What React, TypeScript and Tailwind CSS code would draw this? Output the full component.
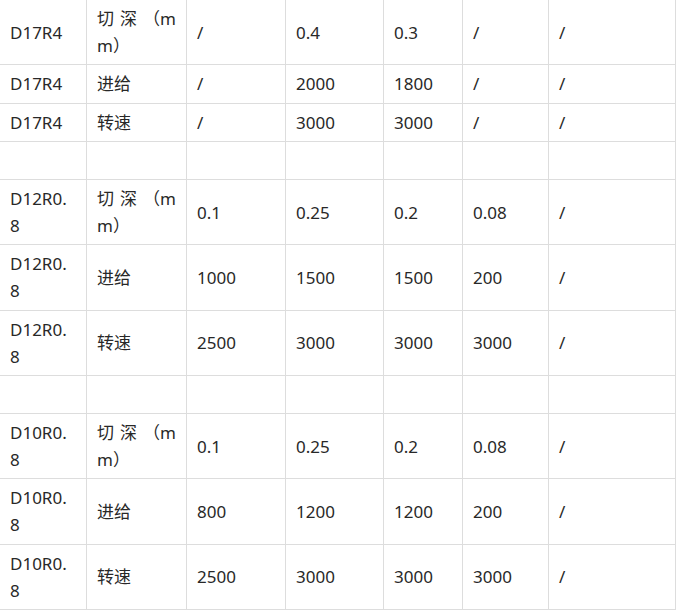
const rows: string[][] = [
  ['D17R4', '切深（mm）', '/', '0.4', '0.3', '/', '/'],
  ['D17R4', '进给', '/', '2000', '1800', '/', '/'],
  ['D17R4', '转速', '/', '3000', '3000', '/', '/'],
  ['', '', '', '', '', '', ''],
  ['D12R0.8', '切深（mm）', '0.1', '0.25', '0.2', '0.08', '/'],
  ['D12R0.8', '进给', '1000', '1500', '1500', '200', '/'],
  ['D12R0.8', '转速', '2500', '3000', '3000', '3000', '/'],
  ['', '', '', '', '', '', ''],
  ['D10R0.8', '切深（mm）', '0.1', '0.25', '0.2', '0.08', '/'],
  ['D10R0.8', '进给', '800', '1200', '1200', '200', '/'],
  ['D10R0.8', '转速', '2500', '3000', '3000', '3000', '/'],
];

// keep "（m" together so justify only spreads the two ideographs
function CellText({ text }: { text: string }) {
  if (text === '切深（mm）') {
    return (
      <>
        切深<span className="inline-block">（m</span>m）
      </>
    );
  }
  return <>{text || '\u00a0'}</>;
}

export default function App() {
  return (
    <div className="w-[676px] h-[611px] overflow-hidden bg-white">
      <div
        className="grid grid-cols-[87px_100px_99px_98px_79px_86px_127px] text-[#282828] text-[17px] leading-[27px]"
        style={{ fontFamily: '"Noto Sans", "Noto Sans CJK SC", sans-serif' }}
      >
        {rows.map((row, ri) =>
          row.map((cell, ci) => (
            <div
              key={`${ri}-${ci}`}
              className="flex items-center border-r border-b border-[#dddddd] pl-[10px] pr-[10px] py-[5.125px]"
            >
              <div className="w-full text-justify break-all">
                <CellText text={cell} />
              </div>
            </div>
          ))
        )}
      </div>
    </div>
  );
}
